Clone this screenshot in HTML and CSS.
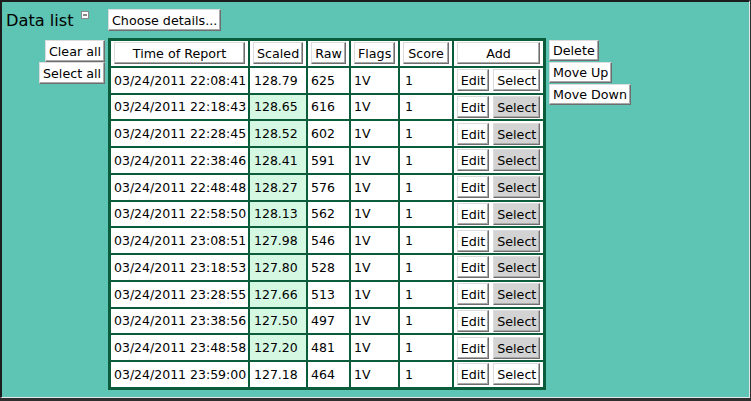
FILE: index.html
```html
<!DOCTYPE html>
<html>
<head>
<meta charset="utf-8">
<title>Data list</title>
<link rel="stylesheet" href="styles.css">
</head>
<body>
<div class="frame">
  <div class="layout">
    <div class="title"><span class="title-text">Data list</span><svg class="toggle" width="8" height="8" viewBox="0 0 8 8"><rect x="0.5" y="0.5" width="7" height="7" fill="#fff" stroke="#8a8a8a"/><line x1="2" y1="4" x2="6" y2="4" stroke="#111" stroke-width="1"/></svg></div>
    <div class="details"><button class="btn">Choose details...</button></div>
    <div class="side-left">
      <button class="btn">Clear all</button>
      <button class="btn">Select all</button>
    </div>
    <table class="data">
      <thead>
        <tr>
          <th class="c-time"><button class="btn btn-head">Time of Report</button></th>
          <th class="c-scaled"><button class="btn btn-head">Scaled</button></th>
          <th class="c-raw"><button class="btn btn-head">Raw</button></th>
          <th class="c-flags"><button class="btn btn-head">Flags</button></th>
          <th class="c-score"><button class="btn btn-head">Score</button></th>
          <th class="c-add"><button class="btn btn-head">Add</button></th>
        </tr>
      </thead>
      <tbody>
        <tr><td>03/24/2011 22:08:41</td><td class="scaled">128.79</td><td>625</td><td>1V</td><td class="score">1</td><td class="actions"><button class="btn">Edit</button> <button class="btn">Select</button></td></tr>
        <tr><td>03/24/2011 22:18:43</td><td class="scaled hl">128.65</td><td>616</td><td>1V</td><td class="score">1</td><td class="actions"><button class="btn">Edit</button> <button class="btn on">Select</button></td></tr>
        <tr><td>03/24/2011 22:28:45</td><td class="scaled hl">128.52</td><td>602</td><td>1V</td><td class="score">1</td><td class="actions"><button class="btn">Edit</button> <button class="btn on">Select</button></td></tr>
        <tr><td>03/24/2011 22:38:46</td><td class="scaled hl">128.41</td><td>591</td><td>1V</td><td class="score">1</td><td class="actions"><button class="btn">Edit</button> <button class="btn on">Select</button></td></tr>
        <tr><td>03/24/2011 22:48:48</td><td class="scaled hl">128.27</td><td>576</td><td>1V</td><td class="score">1</td><td class="actions"><button class="btn">Edit</button> <button class="btn on">Select</button></td></tr>
        <tr><td>03/24/2011 22:58:50</td><td class="scaled hl">128.13</td><td>562</td><td>1V</td><td class="score">1</td><td class="actions"><button class="btn">Edit</button> <button class="btn on">Select</button></td></tr>
        <tr><td>03/24/2011 23:08:51</td><td class="scaled hl">127.98</td><td>546</td><td>1V</td><td class="score">1</td><td class="actions"><button class="btn">Edit</button> <button class="btn on">Select</button></td></tr>
        <tr><td>03/24/2011 23:18:53</td><td class="scaled hl">127.80</td><td>528</td><td>1V</td><td class="score">1</td><td class="actions"><button class="btn">Edit</button> <button class="btn on">Select</button></td></tr>
        <tr><td>03/24/2011 23:28:55</td><td class="scaled hl">127.66</td><td>513</td><td>1V</td><td class="score">1</td><td class="actions"><button class="btn">Edit</button> <button class="btn on">Select</button></td></tr>
        <tr><td>03/24/2011 23:38:56</td><td class="scaled hl">127.50</td><td>497</td><td>1V</td><td class="score">1</td><td class="actions"><button class="btn">Edit</button> <button class="btn on">Select</button></td></tr>
        <tr><td>03/24/2011 23:48:58</td><td class="scaled hl">127.20</td><td>481</td><td>1V</td><td class="score">1</td><td class="actions"><button class="btn">Edit</button> <button class="btn on">Select</button></td></tr>
        <tr><td>03/24/2011 23:59:00</td><td class="scaled">127.18</td><td>464</td><td>1V</td><td class="score">1</td><td class="actions"><button class="btn">Edit</button> <button class="btn">Select</button></td></tr>
      </tbody>
    </table>
    <div class="side-right">
      <button class="btn btn-sm">Delete</button>
      <button class="btn btn-sm">Move Up</button>
      <button class="btn btn-sm">Move Down</button>
    </div>
  </div>
</div>
</body>
</html>
```
FILE: styles.css
```css
html, body {
  margin: 0;
  padding: 0;
}
body {
  background: #2e2e2e;
  font-family: "DejaVu Sans", Verdana, sans-serif;
  color: #000;
  width: 751px;
  height: 401px;
  overflow: hidden;
}
.frame {
  box-sizing: border-box;
  width: 750px;
  height: 398px;
  background: #5ec4b4;
  border-style: solid;
  border-width: 2px 1px 1px 2px;
  border-color: #1c1c1c #e6e6e6 #e6e6e6 #1c1c1c;
  padding: 7px 0 0 4px;
}
.layout {
  display: grid;
  grid-template-columns: 99px 438px auto;
  grid-template-rows: 22px auto;
  column-gap: 3px;
  row-gap: 7px;
  align-items: start;
}
.title {
  grid-column: 1;
  grid-row: 1;
  margin-top: 2.5px;
  font-size: 16.2px;
  line-height: 18px;
  white-space: nowrap;
}
.details {
  grid-column: 2;
  grid-row: 1;
}
.side-left {
  grid-column: 1;
  grid-row: 2;
  display: flex;
  flex-direction: column;
  align-items: flex-end;
  padding-top: 1.5px;
  gap: 0.5px;
}
.data {
  grid-column: 2;
  grid-row: 2;
}
.side-right {
  grid-column: 3;
  grid-row: 2;
  display: flex;
  flex-direction: column;
  align-items: flex-start;
  padding-top: 2px;
  gap: 1px;
}
.toggle {
  display: inline-block;
  vertical-align: top;
  margin-left: 7px;
  margin-top: -0.5px;
}
.btn {
  font-family: "DejaVu Sans", Verdana, sans-serif;
  font-size: 12.7px;
  line-height: 16px;
  color: #000;
  background: #fff;
  border-style: solid;
  border-width: 1px;
  border-color: #dcdcdc #6e6e6e #6e6e6e #dcdcdc;
  box-shadow: inset -1px -1px 0 #a9a9a9;
  padding: 3px 3px 1px 3px;
  margin: 0;
  height: 22px;
  box-sizing: border-box;
  white-space: nowrap;
  border-radius: 0;
  cursor: default;
}
.btn-sm {
  height: 21px;
  padding-top: 2px;
}
.btn-head {
  display: block;
  width: 100%;
}
.btn.on {
  background: #d3d3d3;
}
.data {
  table-layout: fixed;
  width: 438px;
  border-collapse: separate;
  border-spacing: 2px;
  border: 1px solid #0b5c3a;
  background: #0b5c3a;
}
.data tr {
  height: 24.75px;
}
.data th,
.data td {
  box-sizing: border-box;
  background: #fff;
  padding: 0 3px;
  font-size: 12.5px;
  font-weight: normal;
  text-align: left;
  vertical-align: middle;
  white-space: nowrap;
}
.c-time { width: 137px; }
.c-scaled { width: 56px; }
.c-raw { width: 41px; }
.c-flags { width: 47px; }
.c-score { width: 52px; }
.c-add { width: 89px; }
.data td.scaled {
  padding-left: 4px;
}
.data td.score {
  padding-left: 5px;
}
.data td.hl {
  background: #d5f8e3;
}
.data td.actions {
  padding: 0 1px;
  text-align: center;
}
```
